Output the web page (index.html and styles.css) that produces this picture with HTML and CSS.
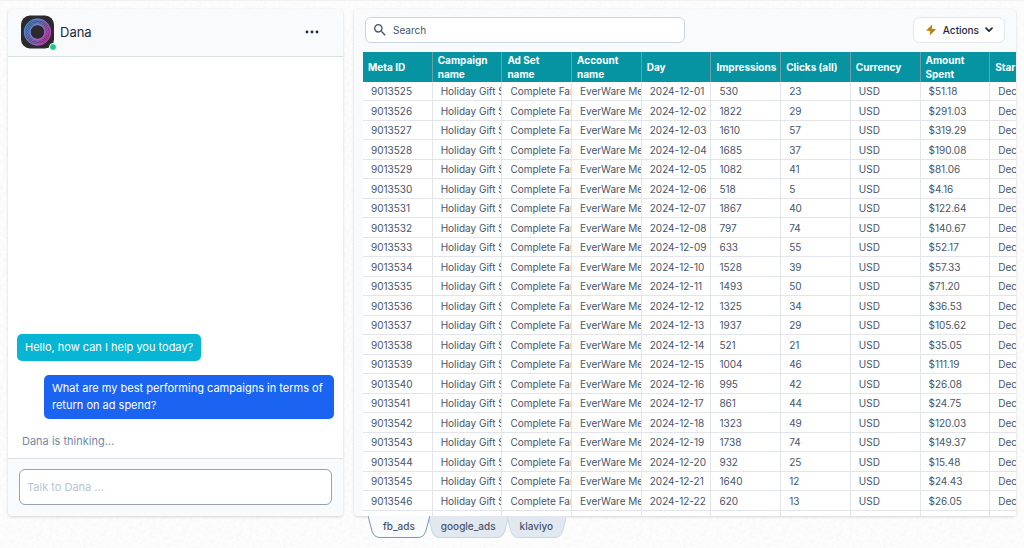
FILE: index.html
```html
<!DOCTYPE html>
<html lang="en">
  <head>
    <meta charset="UTF-8" />
    <meta name="viewport" content="width=device-width, initial-scale=1.0" />
    <title>Dana</title>
    <link rel="stylesheet" href="styles.css">
  </head>
  <body>
    <main class="workspace">
      <section class="panel chat">
        <header class="chat-header">
          <div class="avatar">
            <svg viewBox="0 0 33 33" aria-hidden="true">
              <defs>
                <linearGradient id="ringColor" gradientUnits="userSpaceOnUse" x1="4" y1="8" x2="28" y2="24">
                  <stop offset="0" stop-color="#3fa0f5" />
                  <stop offset="0.5" stop-color="#8f80ee" />
                  <stop offset="1" stop-color="#f03bc8" />
                </linearGradient>
              </defs>
              <rect width="33" height="33" rx="9" fill="#2b2b2d" />
              <g id="rings" fill="none" stroke="url(#ringColor)" stroke-width="0.6"></g>
            </svg>
            <span class="status"></span>
          </div>
          <h2>Dana</h2>
          <button type="button" class="more-btn" aria-label="More options">
            <svg width="14" height="4" viewBox="0 0 14 4" fill="currentColor">
              <circle cx="2" cy="2" r="1.4" />
              <circle cx="7" cy="2" r="1.4" />
              <circle cx="12" cy="2" r="1.4" />
            </svg>
          </button>
        </header>

        <div class="messages">
          <p class="message bot">Hello, how can I help you today?</p>
          <p class="message user">What are my best performing campaigns in terms of return on ad spend?</p>
          <p class="thinking">Dana is thinking...</p>
        </div>

        <form class="chat-form">
          <input type="text" aria-label="Message" placeholder="Talk to Dana ..." />
        </form>
      </section>

      <section class="panel data">
        <div class="toolbar">
          <label class="search">
            <svg width="16" height="16" viewBox="0 0 24 24" fill="currentColor" aria-hidden="true">
              <path d="M15.5 14h-.79l-.28-.27A6.47 6.47 0 0 0 16 9.5 6.5 6.5 0 1 0 9.5 16c1.61 0 3.09-.59 4.23-1.57l.27.28v.79l5 4.99L20.49 19l-4.99-5zm-6 0C7.01 14 5 11.99 5 9.5S7.01 5 9.5 5 14 7.01 14 9.5 11.99 14 9.5 14z" />
            </svg>
            <input type="search" aria-label="Search" placeholder="Search" />
          </label>
          <button type="button" class="actions-btn">
            <svg width="12" height="12" viewBox="0 0 12 12" fill="#b7800f" aria-hidden="true">
              <path d="M7.3 0.6 1 6.6 5.3 7.1 4.7 11.4 11 5.2 6.7 4.8z" />
            </svg>
            Actions
            <svg width="8" height="6" viewBox="0 0 8 6" fill="none" stroke="currentColor" stroke-width="1.7" stroke-linecap="round" stroke-linejoin="round" aria-hidden="true">
              <path d="M1 1.2 4 4.2 7 1.2" />
            </svg>
          </button>
        </div>

        <div class="table-wrap">
          <table>
            <thead>
              <tr>
                <th>Meta ID</th>
                <th>Campaign name</th>
                <th>Ad Set name</th>
                <th>Account name</th>
                <th>Day</th>
                <th>Impressions</th>
                <th>Clicks (all)</th>
                <th>Currency</th>
                <th>Amount Spent</th>
                <th>Star</th>
              </tr>
            </thead>
            <tbody id="rows"></tbody>
          </table>
        </div>
      </section>

      <nav class="tabs">
        <button type="button" class="tab active">
          <svg viewBox="0 0 62 22" preserveAspectRatio="none" aria-hidden="true">
            <path d="M0 0 4 15Q6 21.500 12 21.500H50Q56 21.500 58 15L62 0" />
          </svg>
          <span>fb_ads</span>
        </button>
        <button type="button" class="tab">
          <svg viewBox="0 0 79 22" preserveAspectRatio="none" aria-hidden="true">
            <path d="M0 0 4 15Q6 21.500 12 21.500H67Q73 21.500 75 15L79 0" />
          </svg>
          <span>google_ads</span>
        </button>
        <button type="button" class="tab">
          <svg viewBox="0 0 62 22" preserveAspectRatio="none" aria-hidden="true">
            <path d="M0 0 4 15Q6 21.500 12 21.500H50Q56 21.500 58 15L62 0" />
          </svg>
          <span>klaviyo</span>
        </button>
      </nav>
    </main>

    <script>
      // impressions, clicks, amount spent for each day from 2024-12-01
      const stats = [
        [530, 23, "51.18"],
        [1822, 29, "291.03"],
        [1610, 57, "319.29"],
        [1685, 37, "190.08"],
        [1082, 41, "81.06"],
        [518, 5, "4.16"],
        [1867, 40, "122.64"],
        [797, 74, "140.67"],
        [633, 55, "52.17"],
        [1528, 39, "57.33"],
        [1493, 50, "71.20"],
        [1325, 34, "36.53"],
        [1937, 29, "105.62"],
        [521, 21, "35.05"],
        [1004, 46, "111.19"],
        [995, 42, "26.08"],
        [861, 44, "24.75"],
        [1323, 49, "120.03"],
        [1738, 74, "149.37"],
        [932, 25, "15.48"],
        [1640, 12, "24.43"],
        [620, 13, "26.05"],
      ];

      const tbody = document.getElementById("rows");

      stats.forEach(([impressions, clicks, spent], i) => {
        const row = tbody.insertRow();
        [
          9013525 + i,
          "Holiday Gift S",
          "Complete Fam",
          "EverWare Met",
          "2024-12-" + String(i + 1).padStart(2, "0"),
          impressions,
          clicks,
          "USD",
          "$" + spent,
          "Dec",
        ].forEach((value) => {
          row.insertCell().textContent = value;
        });
      });

      // Empty row at the end of the sheet
      const last = tbody.insertRow();
      for (let i = 0; i < 10; i++) last.insertCell();

      // Avatar: overlapping circles placed around the centre
      const rings = document.getElementById("rings");
      for (let i = 0; i < 12; i++) {
        const angle = (i / 12) * Math.PI * 2;
        const circle = document.createElementNS("http://www.w3.org/2000/svg", "circle");
        circle.setAttribute("cx", 16.5 + Math.cos(angle) * 3);
        circle.setAttribute("cy", 16.5 + Math.sin(angle) * 3);
        circle.setAttribute("r", 10.3);
        rings.appendChild(circle);
      }
    </script>
  </body>
</html>
```
FILE: styles.css
```css
* {
  margin: 0;
  padding: 0;
  box-sizing: border-box;
  font-family: Inter, "Liberation Sans", sans-serif;
}

body {
  background-color: #fdfdfd;
  background-image: url("data:image/svg+xml,%3Csvg xmlns='http://www.w3.org/2000/svg' width='200' height='200'%3E%3Cfilter id='n'%3E%3CfeTurbulence type='fractalNoise' baseFrequency='0.3' numOctaves='2' stitchTiles='stitch'/%3E%3CfeColorMatrix values='0 0 0 0 0.5 0 0 0 0 0.5 0 0 0 0 0.5 0.16 0 0 0 -0.06'/%3E%3C/filter%3E%3Crect width='200' height='200' filter='url(%23n)'/%3E%3C/svg%3E");
  color: #475569;
  font-size: 10px;
}

button {
  border: none;
  background: none;
  cursor: pointer;
}

.workspace {
  display: grid;
  grid-template-columns: 335fr 662fr;
  grid-template-rows: minmax(0, 1fr) 22px;
  column-gap: 11px;
  height: 100vh;
  padding: 8px 8px 10px;
  border-top: 1px solid #f1f1f2;
}

.panel {
  display: flex;
  flex-direction: column;
  min-width: 0;
  background-color: #f8fafc;
  border-radius: 4px;
  box-shadow: 0 1px 3px rgba(0, 0, 0, 0.16);
}

/* Chat */
.chat-header {
  display: flex;
  align-items: center;
  gap: 6px;
  padding: 6px 24px 7px 13px;
  border-bottom: 1px solid #dbdfe6;
}

.avatar {
  position: relative;
  width: 33px;
  height: 34px;
}

.avatar svg {
  display: block;
  width: 100%;
  height: 100%;
}

.status {
  position: absolute;
  right: -3px;
  bottom: -2px;
  width: 8px;
  height: 8px;
  background-color: #22c58b;
  border: 1px solid white;
  border-radius: 50%;
}

.chat-header h2 {
  color: #1e293b;
  font-size: 13px;
  font-weight: 400;
}

.more-btn {
  display: flex;
  margin-left: auto;
  color: #1e293b;
}

.messages {
  flex: 1;
  display: flex;
  flex-direction: column;
  justify-content: flex-end;
  align-items: flex-start;
  padding: 8px 9px;
  background-color: white;
  font-size: 11px;
  line-height: 17px;
}

.message {
  padding: 5px 8px;
  margin-bottom: 14px;
  border-radius: 5px;
  color: white;
}

.bot {
  background-color: #06b6d4;
}

.user {
  align-self: flex-end;
  width: 290px;
  max-width: 100%;
  background-color: #1b64f2;
}

.thinking {
  padding-left: 5px;
  color: #7788a3;
}

.chat-form {
  padding: 10px 11px 11px;
  border-top: 1px solid #dbdfe6;
}

.chat-form input {
  display: block;
  width: 100%;
  height: 36px;
  padding: 0 7px;
  border: 1px solid #94a3b8;
  border-radius: 6px;
  background-color: white;
  font-size: 11px;
}

.chat-form input::placeholder {
  color: #b8c4d4;
}

/* Data table */
.toolbar {
  display: flex;
  justify-content: space-between;
  padding: 8px 11px 9px;
}

.search {
  display: flex;
  align-items: center;
  gap: 5px;
  width: 320px;
  height: 26px;
  padding: 0 6px;
  border: 1px solid #cbd5e1;
  border-radius: 6px;
  background-color: white;
  color: #475569;
}

.search input {
  flex: 1;
  min-width: 0;
  border: none;
  outline: none;
  background: none;
  font-size: 10px;
}

.search input::placeholder {
  color: #475569;
}

.actions-btn {
  display: flex;
  align-items: center;
  gap: 6px;
  height: 26px;
  padding: 0 11px;
  border: 1px solid #e2e8f0;
  border-radius: 6px;
  background-color: white;
  color: #1e293b;
  font-size: 10px;
  font-weight: 500;
}

.table-wrap {
  flex: 1;
  min-height: 0;
  margin-left: 9px;
  overflow: hidden;
  background-color: white;
}

table {
  width: 697px;
  table-layout: fixed;
  border-spacing: 0;
}

th {
  height: 30px;
  padding: 0 5px;
  border-right: 1px solid #6f9fa6;
  background-color: #0694a2;
  color: white;
  font-size: 10px;
  font-weight: 700;
  line-height: 14px;
  text-align: left;
}

/* "Ad Set name" breaks before the last word like its neighbours */
th:nth-child(3) {
  padding-right: 12px;
}

td {
  height: 19px;
  padding: 0 0 0 8px;
  border-right: 1px solid #e2e5eb;
  border-bottom: 1px solid #e2e5eb;
  line-height: 18px;
  overflow: hidden;
  white-space: nowrap;
}

tr:nth-child(even) td {
  height: 20px;
}

/* Sheet tabs */
.tabs {
  grid-column: 2;
  display: flex;
  padding-left: 14px;
}

.tab {
  position: relative;
  height: 22px;
  padding: 0 15px 2px;
  color: #475569;
  font-size: 10px;
  font-weight: 500;
}

.tab + .tab {
  margin-left: -2px;
  padding: 0 13px 2px;
}

.tab svg {
  position: absolute;
  inset: 0;
  width: 100%;
  height: 100%;
  fill: #e2e8f0;
  stroke: #cbd5e1;
}

.tab span {
  position: relative;
}

.tab.active {
  z-index: 1;
}

.tab.active svg {
  fill: #f8fafc;
  stroke: #7f93b0;
}
```
